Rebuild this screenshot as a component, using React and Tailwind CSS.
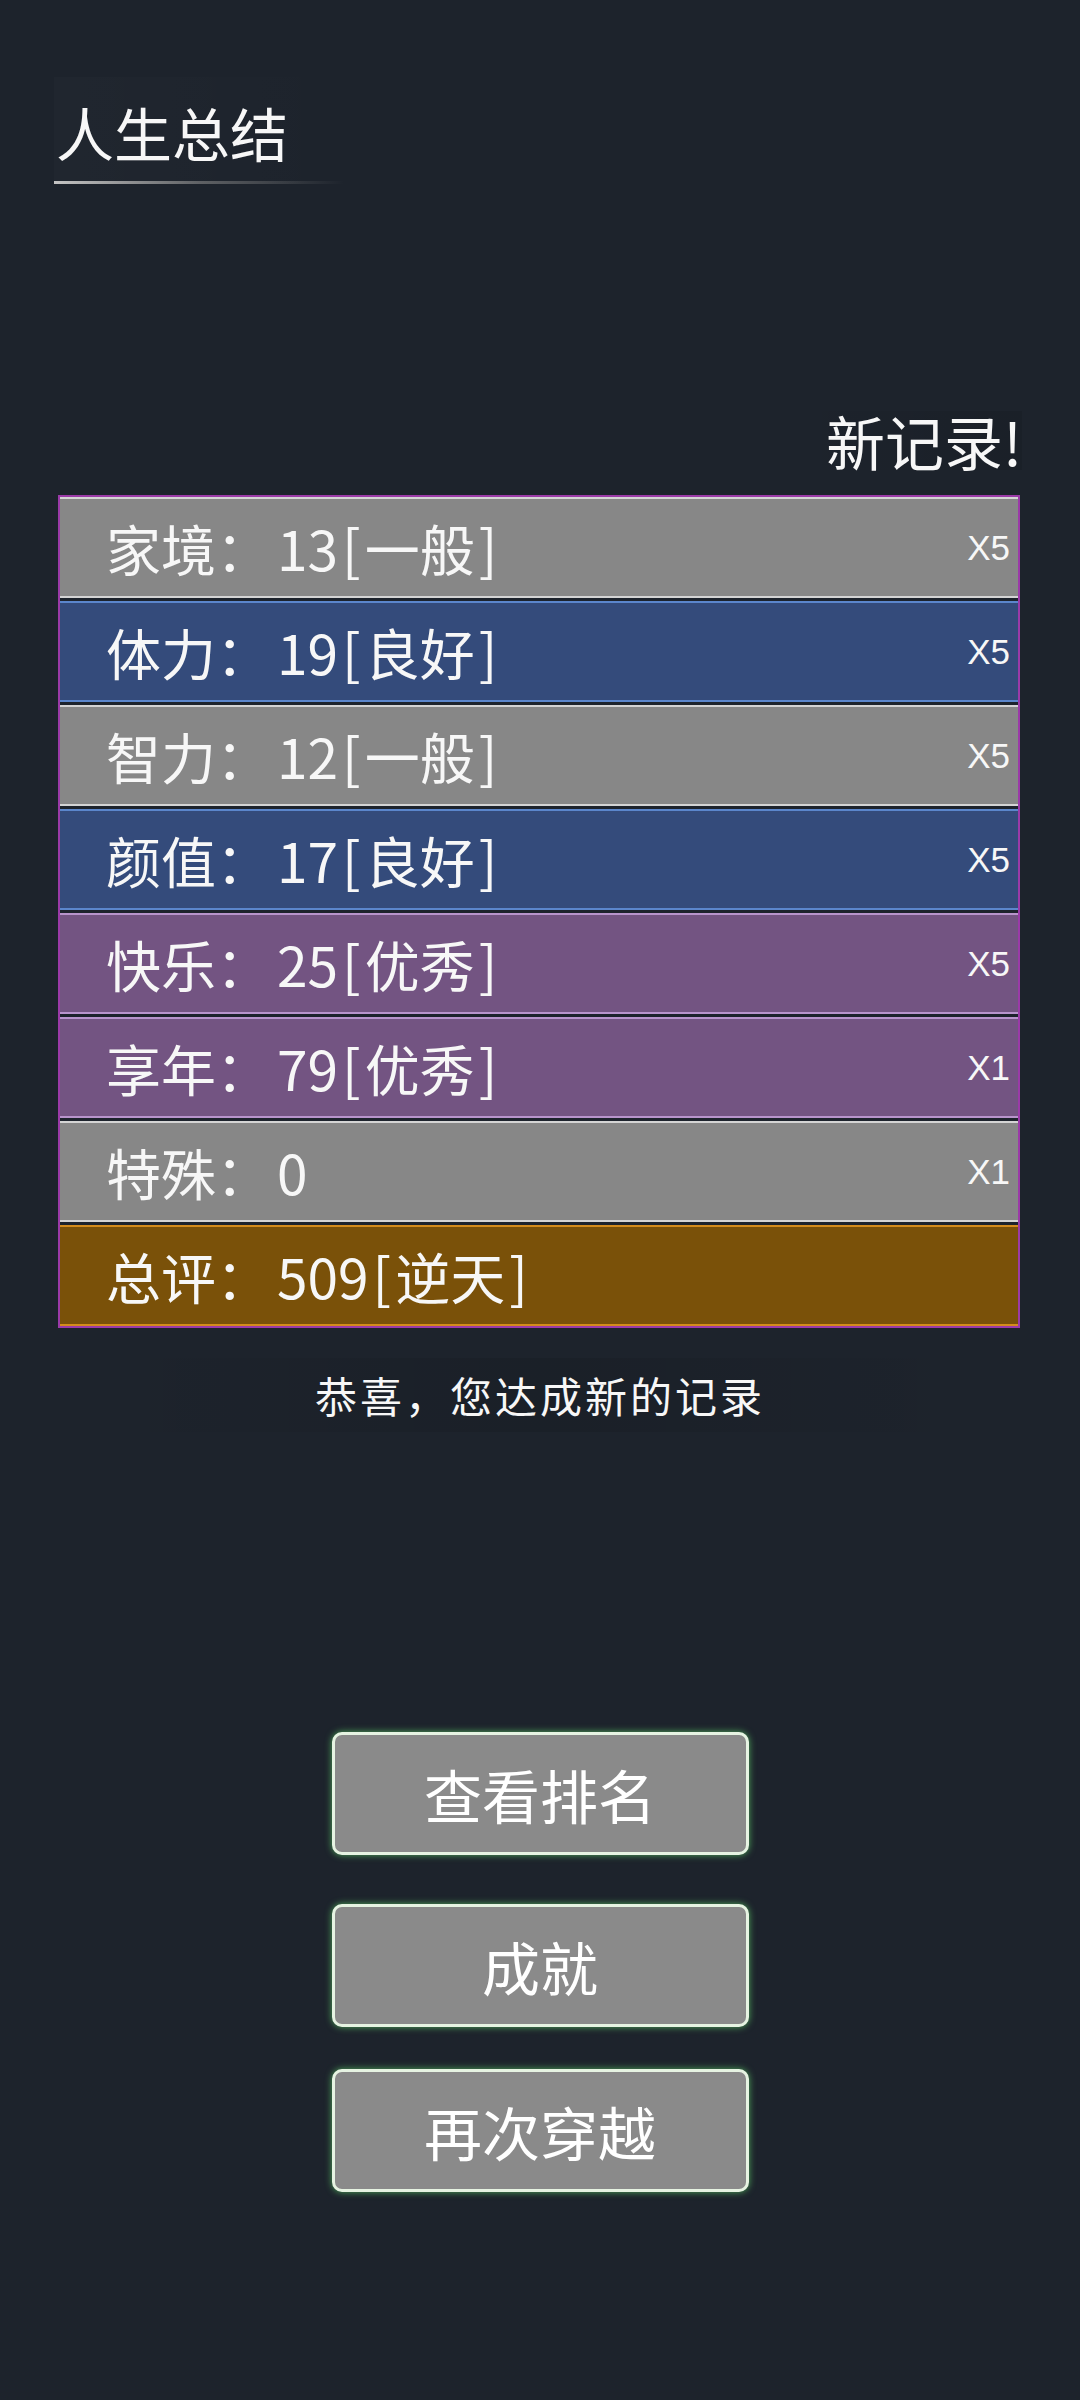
const ROWS = [
  { label: '家境', num: '13', grade: '一般', mult: 'X5', tone: 'gray' },
  { label: '体力', num: '19', grade: '良好', mult: 'X5', tone: 'blue' },
  { label: '智力', num: '12', grade: '一般', mult: 'X5', tone: 'gray' },
  { label: '颜值', num: '17', grade: '良好', mult: 'X5', tone: 'blue' },
  { label: '快乐', num: '25', grade: '优秀', mult: 'X5', tone: 'purple' },
  { label: '享年', num: '79', grade: '优秀', mult: 'X1', tone: 'purple' },
  { label: '特殊', num: '0', grade: '', mult: 'X1', tone: 'gray' },
  { label: '总评', num: '509', grade: '逆天', mult: '', tone: 'gold' },
]

const TONES = {
  gray: 'bg-[#878787] border-[#d4d4d4]',
  blue: 'bg-[#344b7b] border-[#5b86cc]',
  purple: 'bg-[#735482] border-[#b894cc]',
  gold: 'bg-[#7a5109] border-[#d48c1c]',
}

const cjk = { fontFamily: '"Noto Sans CJK SC", "Noto Sans", sans-serif' }

export default function App() {
  return (
    <div className="min-h-[2400px] bg-[#1d232c] text-[#f7f7f7]" style={cjk}>
      {/* header */}
      <div className="pt-[77px] pl-[54px]">
        <div className="w-[290px] pt-[26px] bg-gradient-to-r from-white/[0.015] to-transparent">
          <h1 className="pl-[2px] text-[58px] leading-none font-normal">人生总结</h1>
          <div className="mt-[20px] h-[3px] bg-gradient-to-r from-[#c4c4c4] via-[#8a8a8a]/60 to-transparent" />
        </div>
      </div>

      {/* new record */}
      <div className="mt-[227px] flex justify-end pr-[58px]">
        <div className="pl-[30px] bg-gradient-to-l from-black/10 to-transparent text-[59px] leading-none">
          新记录!
        </div>
      </div>

      <div className="mt-[25px] ml-[58px] w-[962px] border-2 border-[#9b3aa8] bg-[#1d232c] flex flex-col gap-[3px]">
        {ROWS.map((r) => (
          <div
            key={r.label}
            className={`h-[101px] flex items-center justify-between border-y-2 pl-[46px] pr-[8px] ${TONES[r.tone]}`}
          >
            <span className="text-[55px] leading-none">
              {r.label}：<span className="ml-[6px]">{r.num}</span>
              {r.grade && (
                <>
                  <span className="mx-[4px]">[</span>
                  {r.grade}
                  <span className="mx-[4px]">]</span>
                </>
              )}
            </span>
            {r.mult && (
              <span
                className="text-[35px] leading-none"
                style={{ fontFamily: '"Liberation Sans", Arial, sans-serif' }}
              >
                {r.mult}
              </span>
            )}
          </div>
        ))}
      </div>

      <div className="mt-[30px] mx-[100px] py-[16px] bg-gradient-to-r from-transparent via-black/10 to-transparent text-center text-[42px] leading-none tracking-[3px]">
        恭喜，您达成新的记录
      </div>

      {/* actions */}
      <div className="mt-[300px] flex flex-col items-center">
        {['查看排名', '成就', '再次穿越'].map((t, i) => (
          <button
            key={t}
            className={`w-[417px] h-[123px] rounded-[10px] border-[3px] border-[#e6f3e2] bg-[#8a8a8a] shadow-[0_0_7px_#4fa85a] text-[58px] leading-none text-white ${
              i === 1 ? 'mt-[49px]' : i === 2 ? 'mt-[42px]' : ''
            }`}
            style={cjk}
          >
            {t}
          </button>
        ))}
      </div>
    </div>
  )
}
